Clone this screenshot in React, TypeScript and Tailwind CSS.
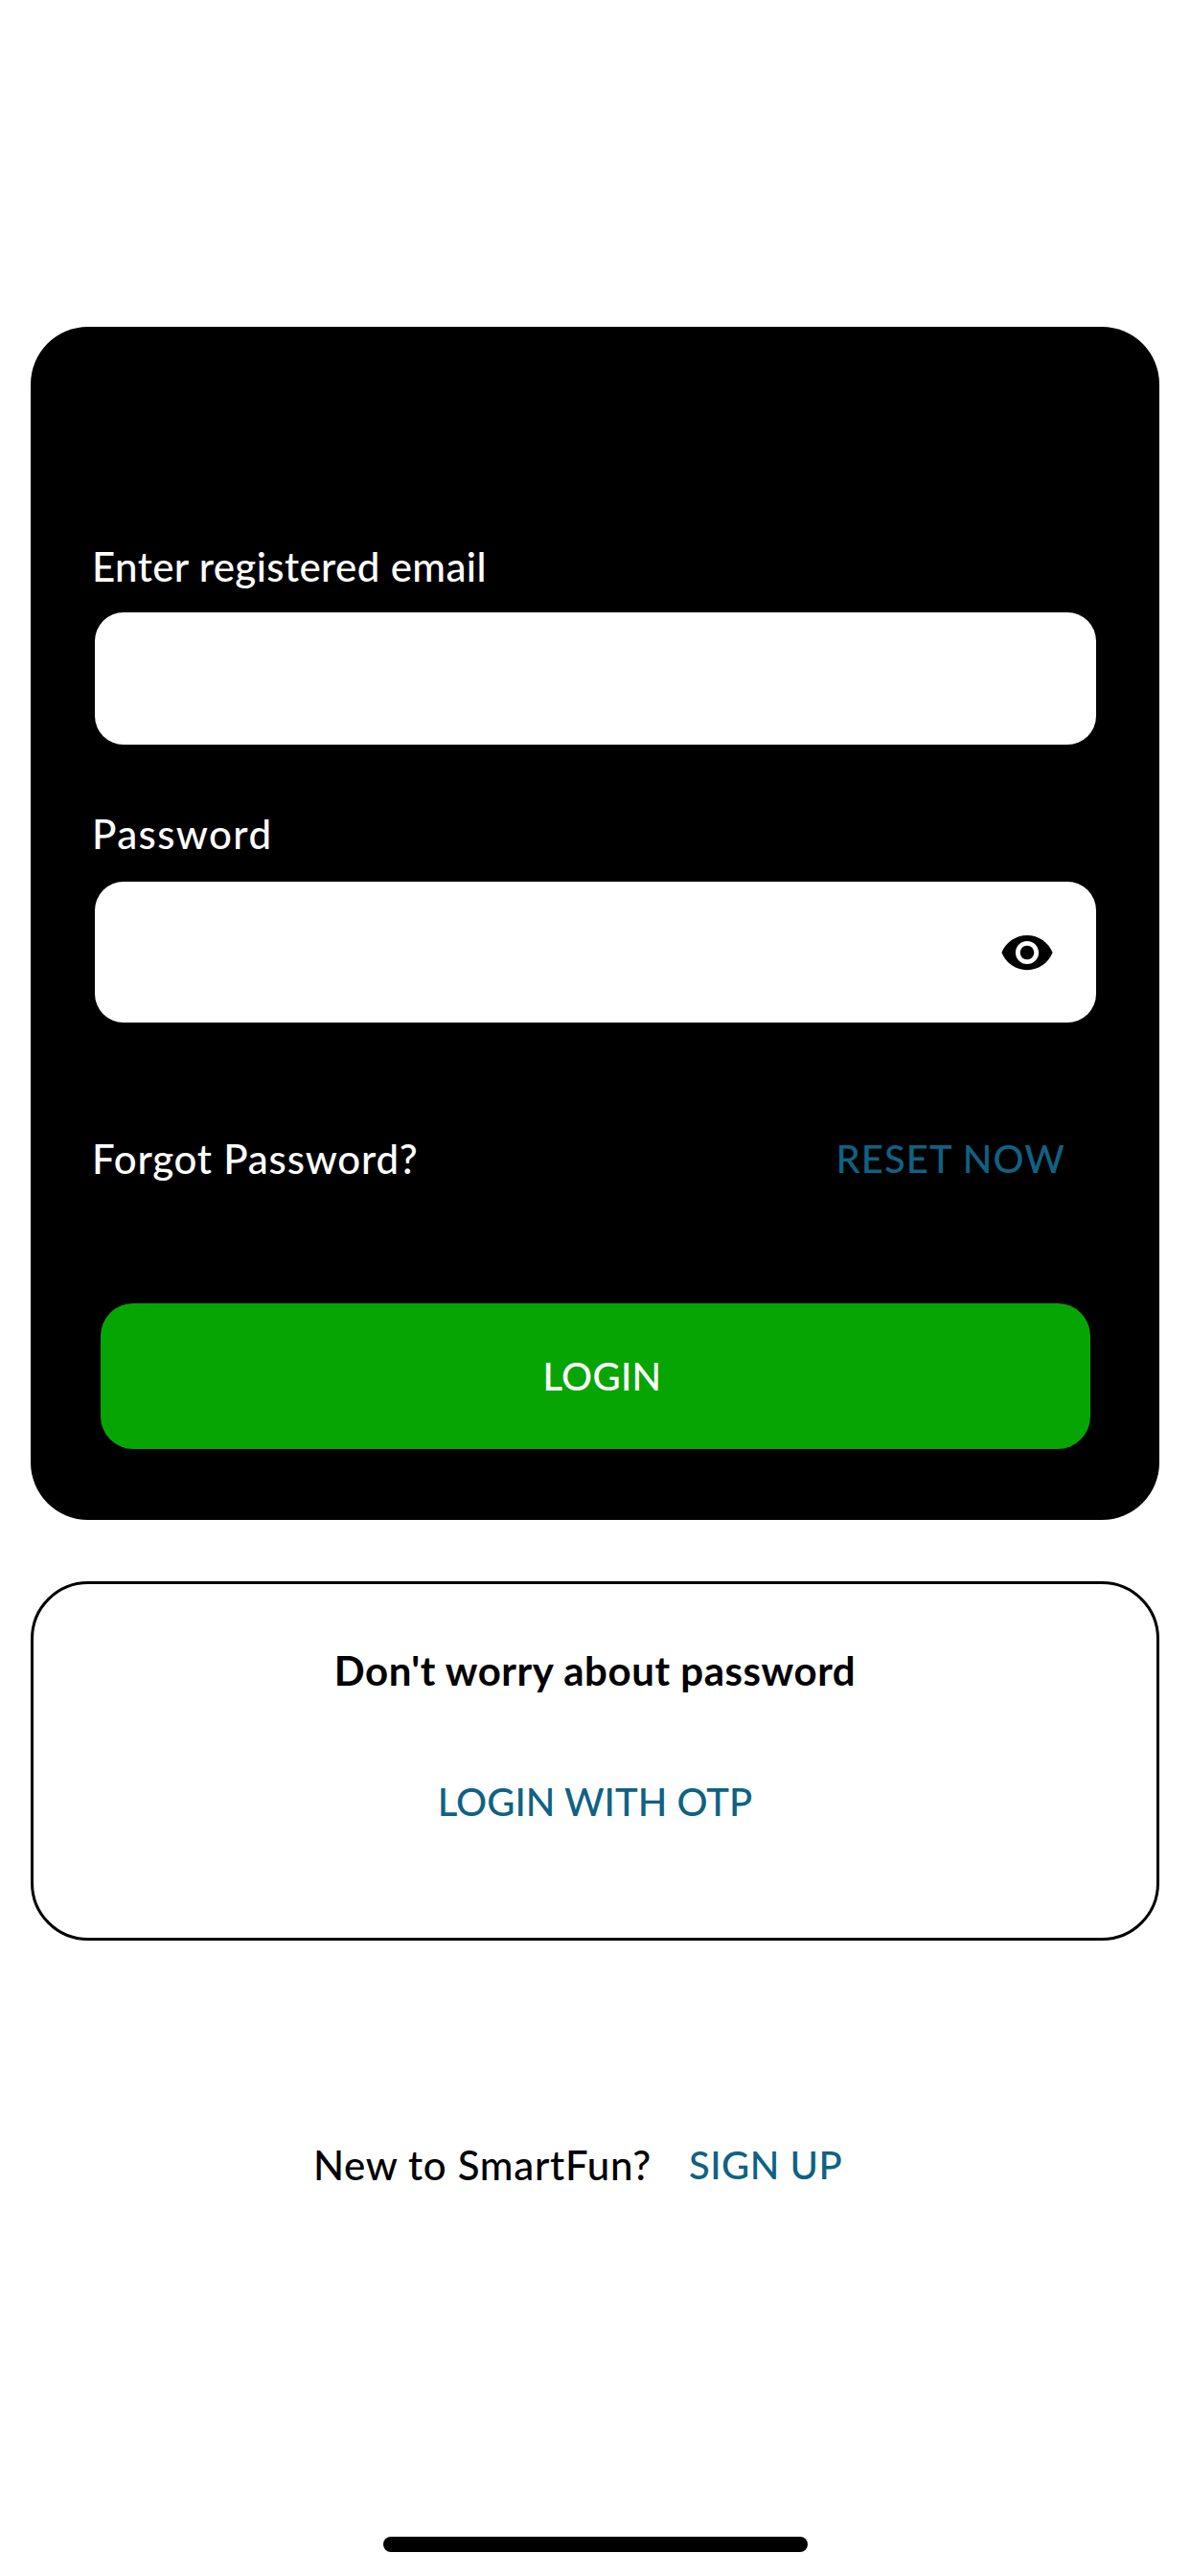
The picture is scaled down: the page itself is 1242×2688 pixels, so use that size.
const EyeIcon = () => (
  <svg viewBox="0 0 24 24" className="w-[58px] h-[58px] fill-black">
    <path d="M12 4.5C7 4.5 2.73 7.61 1 12c1.73 4.39 6 7.5 11 7.5s9.27-3.11 11-7.5c-1.73-4.39-6-7.5-11-7.5zM12 17c-2.76 0-5-2.24-5-5s2.24-5 5-5 5 2.24 5 5-2.24 5-5 5zm0-8c-1.66 0-3 1.34-3 3s1.34 3 3 3 3-1.34 3-3-1.34-3-3-3z" />
  </svg>
);

export default function App() {
  return (
    <div className="w-[1242px] h-[2688px] bg-white flex flex-col items-center font-['Lato','Noto_Sans',sans-serif] text-[40px] leading-[48px]">
      {/* login card */}
      <div className="mt-[341px] w-[1178px] h-[1245px] bg-black rounded-[60px] pt-[226px] pl-[64px] text-white font-medium">
        <div className="text-[42px] tracking-[0.4px]">Enter registered email</div>
        <div className="mt-[24px] ml-[3px] w-[1045px] h-[138px] bg-white rounded-[30px]" />

        <div className="mt-[69px] text-[42px] tracking-[1.4px]">Password</div>
        <div className="mt-[26px] ml-[3px] w-[1045px] h-[147px] bg-white rounded-[30px] flex items-center justify-end pr-[43px]">
          <EyeIcon />
        </div>

        <div className="mt-[118px] w-[1016px] flex justify-between">
          <span className="text-[42px] tracking-[0.8px]">Forgot Password?</span>
          <span className="text-[#0f6283] tracking-[1.1px]">RESET NOW</span>
        </div>

        <div className="mt-[127px] ml-[9px] w-[1033px] h-[152px] bg-[#07a504] rounded-[34px] flex items-center justify-center pl-[14px] tracking-[0.3px]">
          LOGIN
        </div>
      </div>

      {/* otp card */}
      <div className="mt-[64px] w-[1178px] h-[375px] border-[3px] border-black rounded-[60px] flex flex-col items-center pt-[66px] text-black">
        <div className="text-[42px] font-bold tracking-[0.55px]">Don't worry about password</div>
        <div className="mt-[89px] font-medium text-[#0f6283]">LOGIN WITH OTP</div>
      </div>

      <div className="mt-[210px] mr-[36px] flex gap-[39px] font-medium">
        <span className="text-[42px] text-black tracking-[0.7px]">New to SmartFun?</span>
        <span className="text-[#0f6283] tracking-[0.5px]">SIGN UP</span>
      </div>

      <div className="mt-auto mb-[25px] w-[443px] h-[16px] rounded-full bg-black" />
    </div>
  );
}
